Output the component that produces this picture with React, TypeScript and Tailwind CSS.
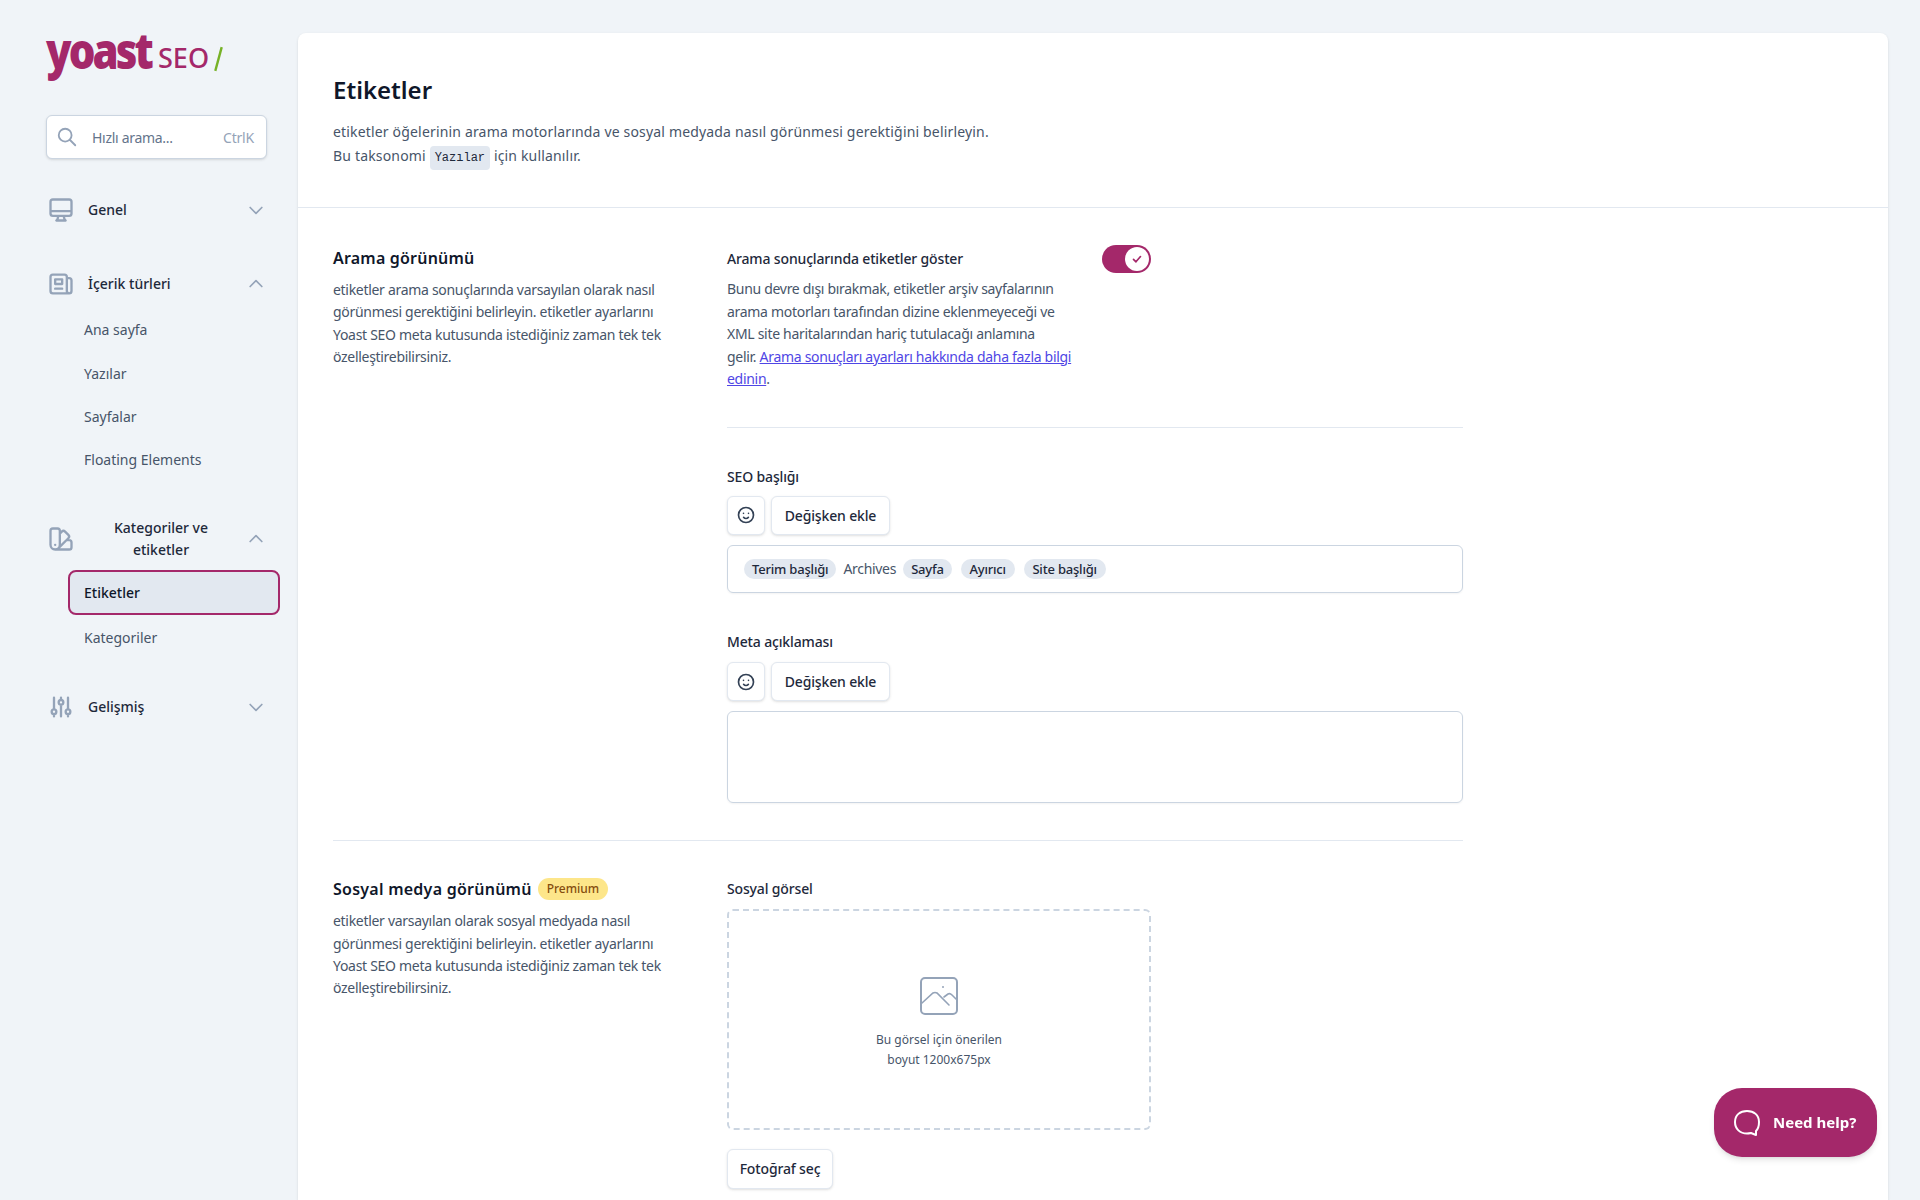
import type { ReactNode } from "react";
import {
  HiOutlineAdjustments,
  HiOutlineChevronDown,
  HiOutlineChevronUp,
  HiOutlineColorSwatch,
  HiOutlineDesktopComputer,
  HiOutlineEmojiHappy,
  HiOutlineNewspaper,
  HiOutlineSearch,
} from "react-icons/hi";

function NavHeading({
  icon,
  open,
  className,
  children,
}: {
  icon: ReactNode;
  open?: boolean;
  className: string;
  children: ReactNode;
}) {
  return (
    <div className={`flex items-center pl-[1px] pr-[32px] text-[14px] font-medium leading-[22.4px] text-[#1e293b] ${className}`}>
      <span className="w-[41px] shrink-0 text-[#94a3b8]">{icon}</span>
      <span className="min-w-0 flex-1">{children}</span>
      {open ? (
        <HiOutlineChevronUp className="size-[20px] shrink-0 text-[#94a3b8]" />
      ) : (
        <HiOutlineChevronDown className="size-[20px] shrink-0 text-[#94a3b8]" />
      )}
    </div>
  );
}

function SubLink({ children }: { children: ReactNode }) {
  return (
    <a className="ml-[22px] flex h-[43.4px] items-center pl-[16px] text-[14px] text-[#475569]">{children}</a>
  );
}

function Chip({ className = "", children }: { className?: string; children: ReactNode }) {
  return (
    <span className={`rounded-full bg-[#e2e8f0] px-[8px] text-center text-[13px] font-medium leading-[20px] tracking-[-0.2px] text-[#1e293b] ${className}`}>
      {children}
    </span>
  );
}

function VariableButtons() {
  return (
    <div className="flex gap-[6px]">
      <button className="flex h-[39px] w-[38px] items-center justify-center rounded-md border border-[#e2e8f0] bg-white shadow-sm">
        <HiOutlineEmojiHappy className="size-[20px] text-[#334155]" />
      </button>
      <button className="h-[39px] w-[119px] rounded-md border border-[#e2e8f0] bg-white text-[14px] font-medium tracking-[-0.15px] text-[#1e293b] shadow-sm">
        Değişken ekle
      </button>
    </div>
  );
}

export default function App() {
  return (
    <div className="flex h-screen overflow-hidden bg-[#f0f4f8] font-['Noto_Sans','Open_Sans',sans-serif]">
      <aside className="w-[298px] shrink-0 pl-[46px]">
        <div className="flex h-[115px] items-start pt-[20px]">
          <span className="w-[106px] origin-left scale-x-[0.84] font-['Open_Sans',sans-serif] text-[50px] font-extrabold leading-[60px] tracking-[-3.5px] text-[#a4286a]">
            yoast
          </span>
          <span className="ml-[6px] mt-[20px] text-[27px] font-medium leading-[36px] text-[#a4286a]">SEO</span>
          <svg viewBox="0 0 12 28" className="ml-[4px] mt-[26px] h-[26px] w-[11px]" aria-hidden="true">
            <path d="M9.5 1 L2.5 27" fill="none" stroke="#77b227" strokeWidth="2.6" />
          </svg>
        </div>

        <div className="flex h-[44px] w-[221px] items-center rounded-md border border-[#cbd5e1] bg-white pl-[9px] pr-[12px] shadow-sm">
          <HiOutlineSearch className="size-[22px] text-[#94a3b8]" />
          <span className="ml-[14px] flex-1 text-[14px] tracking-[-0.3px] text-[#64748b]">Hızlı arama...</span>
          <span className="text-[14px] tracking-[-0.2px] text-[#94a3b8]">CtrlK</span>
        </div>

        <NavHeading className="mt-[39px] h-[24px]" icon={<HiOutlineDesktopComputer className="size-[28px]" />}>
          Genel
        </NavHeading>

        <NavHeading className="mt-[50px] h-[24px]" open icon={<HiOutlineNewspaper className="size-[28px]" />}>
          İçerik türleri
        </NavHeading>
        <div className="mt-[12px]">
          <SubLink>Ana sayfa</SubLink>
          <SubLink>Yazılar</SubLink>
          <SubLink>Sayfalar</SubLink>
          <SubLink>Floating Elements</SubLink>
        </div>

        <NavHeading className="mt-[35px]" open icon={<HiOutlineColorSwatch className="size-[28px]" />}>
          <span className="mr-[12px] block text-center">Kategoriler ve etiketler</span>
        </NavHeading>
        <a className="ml-[22px] mt-[9px] flex h-[45px] w-[212px] items-center rounded-lg border-2 border-[#a4286a] bg-[#e2e8f0] pl-[14px] text-[14px] font-medium text-[#0f172a]">
          Etiketler
        </a>
        <SubLink>Kategoriler</SubLink>

        <NavHeading className="mt-[36px] h-[24px]" icon={<HiOutlineAdjustments className="size-[28px]" />}>
          Gelişmiş
        </NavHeading>
      </aside>

      <main className="mt-[33px] w-[1590px] shrink-0 rounded-t-lg bg-white shadow-sm">
        <header className="h-[175px] border-b border-[#e2e8f0] pl-[35px] pt-[38px]">
          <h1 className="text-[24px] font-semibold leading-[38px] text-[#0f172a]">Etiketler</h1>
          <div className="mt-[12px] text-[14px] leading-[22.4px] tracking-[0.17px] text-[#475569]">
            <p>etiketler öğelerinin arama motorlarında ve sosyal medyada nasıl görünmesi gerektiğini belirleyin.</p>
            <p className="mt-[2px]">
              Bu taksonomi{" "}
              <code className="rounded bg-[#e2e8f0] px-[5px] py-[5px] font-['Liberation_Mono',monospace] text-[12px] tracking-normal text-[#1e293b]">
                Yazılar
              </code>{" "}
              için kullanılır.
            </p>
          </div>
        </header>

        <div className="ml-[35px] w-[1130px]">
          <section className="flex border-b border-[#e2e8f0] pb-[37px] pt-[39px]">
            <div className="mt-[-1px] w-[394px] shrink-0 pr-[58px]">
              <h2 className="text-[16px] font-semibold leading-[24px] tracking-[0.2px] text-[#0f172a]">Arama görünümü</h2>
              <p className="mt-[9px] text-[14px] leading-[22.4px] tracking-[-0.3px] text-[#475569]">
                etiketler arama sonuçlarında varsayılan olarak nasıl görünmesi gerektiğini belirleyin. etiketler ayarlarını
                Yoast SEO meta kutusunda istediğiniz zaman tek tek özelleştirebilirsiniz.
              </p>
            </div>

            <div className="mt-[1px] min-w-0 flex-1">
              <div className="flex w-[424px] items-start justify-between">
                <div className="w-[346px]">
                  <div className="text-[14px] font-medium leading-[22.4px] tracking-[-0.15px] text-[#1e293b]">
                    Arama sonuçlarında etiketler göster
                  </div>
                  <p className="mt-[8px] text-[14px] leading-[22.4px] tracking-[-0.3px] text-[#475569]">
                    Bunu devre dışı bırakmak, etiketler arşiv sayfalarının arama motorları tarafından dizine eklenmeyeceği ve
                    XML site haritalarından hariç tutulacağı anlamına
                    <br />
                    gelir. <a className="text-[#4f46e5] underline">Arama sonuçları ayarları hakkında daha fazla bilgi edinin</a>.
                  </p>
                </div>
                <span className="mt-[-3px] flex h-[28px] w-[49px] items-center justify-end rounded-full bg-[#a4286a] pr-[2px]">
                  <span className="flex size-[24px] items-center justify-center rounded-full bg-white">
                    <svg viewBox="0 0 20 20" className="size-[14px]" aria-hidden="true">
                      <path d="M5 10.5 L8.5 14 L15 6.5" fill="none" stroke="#a4286a" strokeWidth="2.4" strokeLinecap="round" strokeLinejoin="round" />
                    </svg>
                  </span>
                </span>
              </div>

              <div className="mt-[37px] border-t border-[#e2e8f0] pt-[38px]">
                <div className="text-[14px] font-medium leading-[22.4px] tracking-[-0.15px] text-[#1e293b]">SEO başlığı</div>
                <div className="mt-[7px]">
                  <VariableButtons />
                </div>
                <div className="mt-[10px] flex h-[48px] items-center gap-[7px] rounded-md border border-[#cbd5e1] pl-[16px] shadow-xs">
                  <Chip>Terim başlığı</Chip>
                  <span className="text-[14px] tracking-[-0.3px] text-[#475569]">Archives</span>
                  <Chip>Sayfa</Chip>
                  <Chip className="ml-[2px] w-[54px]">Ayırıcı</Chip>
                  <Chip className="ml-[2px] w-[82px]">Site başlığı</Chip>
                </div>
              </div>

              <div className="mt-[38px] text-[14px] font-medium leading-[22.4px] tracking-[-0.15px] text-[#1e293b]">Meta açıklaması</div>
              <div className="mt-[9px]">
                <VariableButtons />
              </div>
              <div className="mt-[10px] h-[92px] rounded-md border border-[#cbd5e1] shadow-xs" />
            </div>
          </section>

          <section className="flex pt-[36px]">
            <div className="w-[394px] shrink-0 pr-[58px]">
              <h2 className="flex items-center gap-[6px] text-[16px] font-semibold leading-[24px] tracking-[0.25px] text-[#0f172a]">
                Sosyal medya görünümü
                <span className="rounded-full bg-[#fde68a] px-[9px] text-[12px] font-medium leading-[22px] tracking-normal text-[#854d0e]">
                  Premium
                </span>
              </h2>
              <p className="mt-[9px] text-[14px] leading-[22.4px] tracking-[-0.3px] text-[#475569]">
                etiketler varsayılan olarak sosyal medyada nasıl görünmesi gerektiğini belirleyin. etiketler ayarlarını
                Yoast SEO meta kutusunda istediğiniz zaman tek tek özelleştirebilirsiniz.
              </p>
            </div>
            <div className="w-[424px]">
              <div className="mt-[1px] text-[14px] font-medium leading-[22.4px] tracking-[-0.15px] text-[#1e293b]">Sosyal görsel</div>
              <div className="mt-[8px] flex h-[221px] flex-col items-center justify-center rounded-md border-2 border-dashed border-[#cbd5e1] pt-[8px]">
                <svg viewBox="0 0 38 38" className="size-[38px]" fill="none" stroke="#94a3b8" aria-hidden="true">
                  <rect x="1" y="1" width="36" height="36" rx="4" strokeWidth="2" />
                  <path d="M2 26 L13 16 Q15 15 17 16 L29 28" strokeWidth="1.6" strokeLinecap="round" />
                  <path d="M24 20 L28 17 Q30 16 32 18 L36 22" strokeWidth="1.6" strokeLinecap="round" />
                  <circle cx="23" cy="10" r="1" fill="#94a3b8" stroke="none" />
                </svg>
                <p className="mt-[15px] w-[150px] text-center text-[12px] leading-[20px] text-[#475569]">
                  Bu görsel için önerilen boyut 1200x675px
                </p>
              </div>
              <button className="mt-[19px] h-[40px] w-[106px] rounded-md border border-[#e2e8f0] bg-white text-[14px] font-medium tracking-[-0.15px] text-[#1e293b] shadow-sm">
                Fotoğraf seç
              </button>
            </div>
          </section>
        </div>
      </main>

      <button className="fixed bottom-[43px] right-[43px] flex h-[69px] w-[163px] items-center rounded-[28px] bg-[#a4286a] pl-[18px] text-[15px] font-bold text-white shadow-md">
        <svg viewBox="0 0 30 30" className="size-[30px]" aria-hidden="true">
          <path
            d="M15 3 C22 3 27 7 27 14 C27 18 26 21 24 23 L24 27 L19 25 C17.500 25.300 16 25.500 15 25.500 C8 25.500 3 21 3 14 C3 7 8 3 15 3 Z"
            fill="none"
            stroke="white"
            strokeWidth="2"
            strokeLinejoin="round"
          />
        </svg>
        <span className="ml-[11px]">Need help?</span>
      </button>
    </div>
  );
}
